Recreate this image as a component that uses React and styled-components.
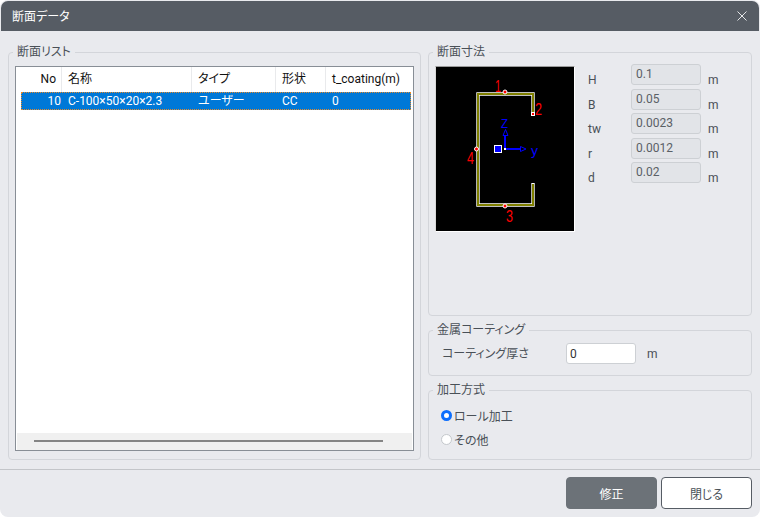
import React from "react";
import styled, { createGlobalStyle } from "styled-components";

const Global = createGlobalStyle`
  html, body { margin: 0; padding: 0; background: #fff; }
  * { box-sizing: border-box; }
  body {
    font-family: Roboto, "Noto Sans CJK JP", sans-serif;
    font-size: 12px;
    font-feature-settings: "palt";
    color: #495057;
  }
`;

const Window = styled.div`
  width: 760px;
  height: 517px;
  padding: 1px 1px 0 1px;
  display: flex;
  flex-direction: column;
  background: #e9eaee;
  border-radius: 8px;
  overflow: hidden;
`;

const TitleBar = styled.div`
  height: 30px;
  flex: none;
  display: flex;
  align-items: center;
  justify-content: space-between;
  padding: 0 11px 2px 11px;
  background: #565c64;
  border-radius: 7px 7px 0 0;
  color: #fff;
  font-size: 12px;
`;

const CloseButton = styled.button`
  width: 12px;
  height: 12px;
  padding: 0;
  margin-top: 2px;
  border: 0;
  display: flex;
  background: none;
  color: #e4e6e8;
`;

const Main = styled.div`
  height: 429px;
  flex: none;
  padding: 13px 7px 0 7px;
  display: grid;
  grid-template-columns: 413px 324px;
  column-gap: 7px;
`;

const Group = styled.fieldset`
  margin: 0;
  min-width: 0;
  padding: 0;
  border: 1px solid #d3d5da;
  border-radius: 4px;
  height: ${(p) => (p.$h ? p.$h + "px" : "auto")};
  flex: ${(p) => (p.$h ? "none" : "1")};
`;

const Legend = styled.legend`
  margin-left: 4px;
  padding: 0 4px;
  height: 16px;
  line-height: 16px;
  font-size: 12px;
  color: #495057;
`;

const Column = styled.div`
  display: flex;
  flex-direction: column;
  gap: 6px;
  min-height: 0;
`;

const ListFrame = styled.div`
  height: 385px;
  margin: 6px 6px 0 6px;
  display: flex;
  flex-direction: column;
  border: 1px solid #888e96;
  background: #fff;
`;

const Row = styled.div`
  display: grid;
  grid-template-columns: 41px 130px 84px 50px 85px;
  margin: 0 2px 0 5px;
  align-items: start;
  flex: none;
`;

const HeadRow = styled(Row)`
  height: 25px;
`;

const DataRow = styled(Row)`
  height: 18px;
  background: #0078d7;
  color: #fff;
  outline: 1px dotted #e58a2c;
  outline-offset: -1px;
`;

const HeadCell = styled.div`
  height: 25px;
  line-height: 25px;
  padding-left: ${(p) => (p.$num ? "0" : "6px")};
  padding-right: ${(p) => (p.$num ? "5px" : "0")};
  text-align: ${(p) => (p.$num ? "right" : "left")};
  color: #111;
  white-space: nowrap;
  border-right: ${(p) => (p.$last ? "0" : "1px solid #e9eaec")};
`;

const Cell = styled.div`
  line-height: 18px;
  padding-left: ${(p) => (p.$num ? "0" : "6px")};
  padding-right: ${(p) => (p.$num ? "1px" : "0")};
  text-align: ${(p) => (p.$num ? "right" : "left")};
  white-space: nowrap;
`;

const ListBody = styled.div`
  flex: 1;
`;

const ScrollTrack = styled.div`
  height: 17px;
  flex: none;
  padding: 7px 29px 0 17px;
  background: #f0f0f0;
  margin: 0 1px;
`;

const ScrollThumb = styled.div`
  height: 2px;
  background: #858585;
`;

const DimsBody = styled.div`
  display: flex;
  padding: 6px 0 0 6px;
`;

const Canvas = styled.div`
  width: 140px;
  height: 166px;
  flex: none;
  background: #000;
  border-top: 1px solid #9a9a9a;
  border-left: 1px solid #d8d8d8;
  border-right: 1px solid #fff;
  border-bottom: 1px solid #fff;
`;

const DimGrid = styled.div`
  margin: -2px 0 0 13px;
  display: grid;
  grid-template-columns: 43px 70px auto;
  grid-auto-rows: 24.5px;
`;

const DimLabel = styled.div`
  padding-top: 8px;
  line-height: 16px;
  color: #495057;
`;

const DimField = styled.div`
  width: 70px;
  height: 21px;
  padding: 1px 4px 0 4px;
  line-height: 16px;
  background: #e2e4e8;
  border: 1px solid #cdd0d4;
  border-radius: 3px;
  color: #5a6066;
`;

const DimUnit = styled.div`
  padding: 8px 0 0 7px;
  line-height: 16px;
`;

const CoatingRow = styled.div`
  display: flex;
  align-items: center;
  padding-left: 13px;
  height: 21px;
  margin-top: 5px;
`;

const CoatingLabel = styled.div`
  width: 124px;
  margin-top: -3px;
`;

const TextInput = styled.input`
  width: 70px;
  height: 21px;
  padding: 0 3px;
  font: inherit;
  color: #333;
  background: #fff;
  border: 1px solid #cdd0d4;
  border-radius: 3px;
  outline: 0;
`;

const Unit = styled.div`
  margin-left: 11px;
`;

const RadioList = styled.div`
  display: flex;
  flex-direction: column;
  gap: 8px;
  padding: 9px 0 0 12px;
`;

const RadioRow = styled.label`
  display: flex;
  align-items: center;
  height: 16px;
  gap: 2px;
`;

const RadioDot = styled.span`
  width: 11px;
  height: 11px;
  border-radius: 50%;
  background: #fff;
  border: ${(p) => (p.$on ? "3px solid #0d6efd" : "1px solid #c4c8cc")};
`;

const Footer = styled.div`
  flex: 1;
  margin: 9px -1px 0 -1px;
  padding: 7px 8px 0 0;
  display: flex;
  justify-content: flex-end;
  gap: 4px;
  border-top: 1px solid #c3c5c9;
`;

const Button = styled.button`
  width: 91px;
  height: 32px;
  padding: 0;
  font: inherit;
  border-radius: 4px;
  color: ${(p) => (p.$primary ? "#fff" : "#495057")};
  background: ${(p) => (p.$primary ? "#6c7278" : "#fff")};
  border: 1px solid ${(p) => (p.$primary ? "#6c7278" : "#565c64")};
`;

const DrawingText = styled.text`
  font-family: "Liberation Sans", sans-serif;
  font-feature-settings: normal;
`;

const SectionDrawing = () => (
  <svg width="138" height="164" viewBox="436 67 138 164" style={{ display: "block" }}>
    <path d="M533 115V94H478V205H533V183" fill="none" stroke="#fff" strokeWidth="3.4" />
    <path d="M533 114V94H478V205H533V184" fill="none" stroke="#808000" strokeWidth="2" />
    <g fill="#ff0000" stroke="#fff" strokeWidth="1">
      <circle cx="505" cy="92" r="2" />
      <rect x="531.5" y="112.5" width="3" height="3" />
      <circle cx="476.5" cy="149" r="2" />
      <circle cx="505" cy="206" r="2" />
    </g>
    <g fontSize="17" fill="#ff0000">
      <DrawingText x="495" y="92" textLength="6" lengthAdjust="spacingAndGlyphs">1</DrawingText>
      <DrawingText x="535" y="115" textLength="7" lengthAdjust="spacingAndGlyphs">2</DrawingText>
      <DrawingText x="506" y="222" textLength="7" lengthAdjust="spacingAndGlyphs">3</DrawingText>
      <DrawingText x="467" y="164" textLength="7" lengthAdjust="spacingAndGlyphs">4</DrawingText>
    </g>
    <g fill="none" stroke="#0000ff">
      <path d="M505 149V135M505 149H520" strokeWidth="2" />
      <path d="M505.5 129.5L503 135.5H508Z" />
      <path d="M520.5 146.5L526 149L520.5 151.5Z" />
    </g>
    <rect x="504" y="148" width="2" height="2" fill="#fff" />
    <rect x="494.5" y="145.5" width="7" height="7" fill="#0000ff" stroke="#fff" />
    <g fontSize="13" fill="#0000ff">
      <DrawingText x="501" y="128" textLength="7" lengthAdjust="spacingAndGlyphs">Z</DrawingText>
      <DrawingText x="531" y="155" textLength="7" lengthAdjust="spacingAndGlyphs">y</DrawingText>
    </g>
  </svg>
);

const dims = [
  ["H", "0.1"],
  ["B", "0.05"],
  ["tw", "0.0023"],
  ["r", "0.0012"],
  ["d", "0.02"],
];

export default function App() {
  return (
    <>
      <Global />
      <Window>
        <TitleBar>
          <span>断面データ</span>
          <CloseButton aria-label="close">
            <svg width="12" height="12" viewBox="0 0 12 12">
              <path d="M1.5 1.5L10.5 10.5M10.5 1.5L1.5 10.5" stroke="currentColor" fill="none" />
            </svg>
          </CloseButton>
        </TitleBar>
        <Main>
          <Group>
            <Legend>断面リスト</Legend>
            <ListFrame>
              <HeadRow>
                <HeadCell $num>No</HeadCell>
                <HeadCell>名称</HeadCell>
                <HeadCell>タイプ</HeadCell>
                <HeadCell>形状</HeadCell>
                <HeadCell $last>t_coating(m)</HeadCell>
              </HeadRow>
              <DataRow>
                <Cell $num>10</Cell>
                <Cell>C-100×50×20×2.3</Cell>
                <Cell>ユーザー</Cell>
                <Cell>CC</Cell>
                <Cell>0</Cell>
              </DataRow>
              <ListBody />
              <ScrollTrack>
                <ScrollThumb />
              </ScrollTrack>
            </ListFrame>
          </Group>
          <Column>
            <Group>
              <Legend>断面寸法</Legend>
              <DimsBody>
                <Canvas>
                  <SectionDrawing />
                </Canvas>
                <DimGrid>
                  {dims.map(([name, value]) => (
                    <React.Fragment key={name}>
                      <DimLabel>{name}</DimLabel>
                      <DimField>{value}</DimField>
                      <DimUnit>m</DimUnit>
                    </React.Fragment>
                  ))}
                </DimGrid>
              </DimsBody>
            </Group>
            <Group $h={54}>
              <Legend>金属コーティング</Legend>
              <CoatingRow>
                <CoatingLabel>コーティング厚さ</CoatingLabel>
                <TextInput defaultValue="0" />
                <Unit>m</Unit>
              </CoatingRow>
            </Group>
            <Group $h={78}>
              <Legend>加工方式</Legend>
              <RadioList>
                <RadioRow>
                  <RadioDot $on />
                  ロール加工
                </RadioRow>
                <RadioRow>
                  <RadioDot />
                  その他
                </RadioRow>
              </RadioList>
            </Group>
          </Column>
        </Main>
        <Footer>
          <Button $primary>修正</Button>
          <Button>閉じる</Button>
        </Footer>
      </Window>
    </>
  );
}
